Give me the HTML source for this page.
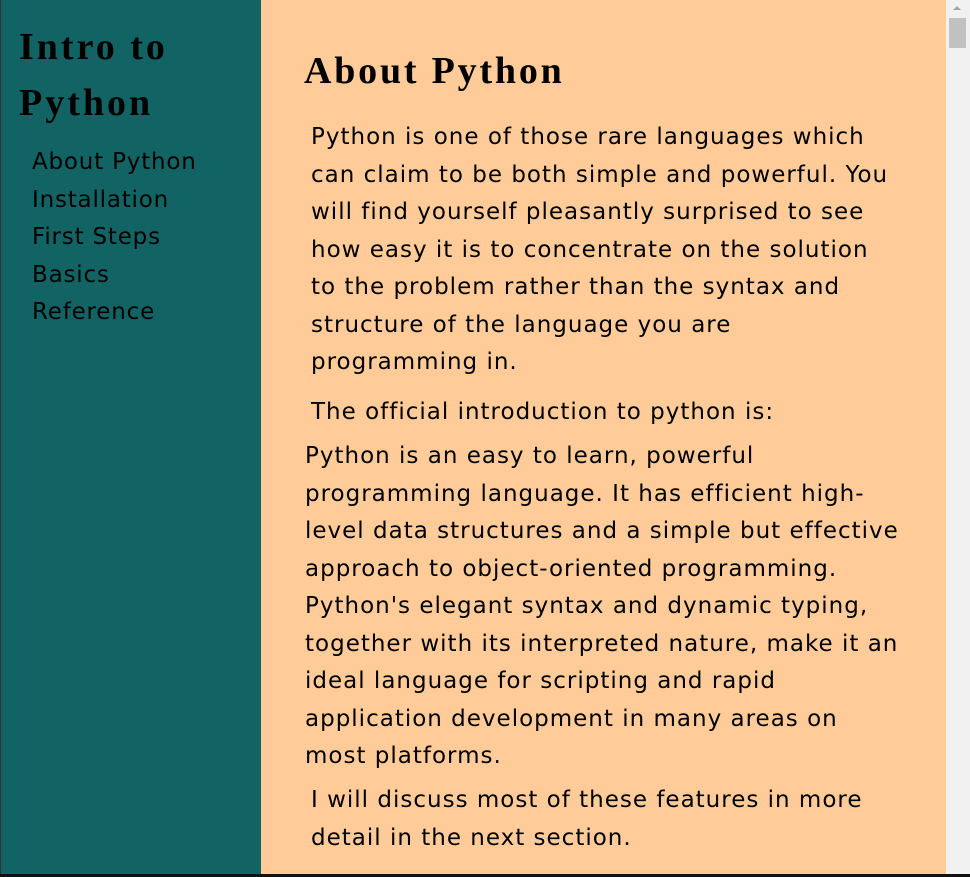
<!DOCTYPE html>
<html><head><meta charset="utf-8"><style>
html,body{margin:0;padding:0;}
body{width:970px;height:877px;overflow:hidden;position:relative;background:#ffcc99;font-family:"DejaVu Sans","Liberation Sans",sans-serif;color:#111;}
#side{position:absolute;left:0;top:0;width:260px;height:874px;background:#126464;border-left:1px solid #333;}
#side h1{font-family:"Liberation Serif",serif;font-weight:bold;font-size:38px;letter-spacing:3px;line-height:56px;margin:0;position:absolute;left:18px;top:19px;color:#000;}
#side ul{list-style:none;margin:0;padding:0;position:absolute;left:31px;top:144px;}
#side li{font-size:23px;letter-spacing:0.8px;line-height:37.5px;white-space:nowrap;color:#000;}
#main{position:absolute;left:261px;top:0;width:685px;height:874px;}
h2{font-family:"Liberation Serif",serif;font-weight:bold;font-size:38px;letter-spacing:2.8px;margin:0;position:absolute;left:43px;top:48px;line-height:46px;color:#000;}
.t{position:absolute;font-size:23px;letter-spacing:1px;line-height:37.5px;white-space:nowrap;color:#000;}
#sb{position:absolute;left:946px;top:0;width:24px;height:874px;background:#f1f1f1;}
#thumb{position:absolute;left:949px;top:18px;width:17px;height:30px;background:#c1c1c1;}
#bot{position:absolute;left:0;top:874px;width:970px;height:3px;background:#111;}
</style></head><body>
<div id="side"><h1>Intro to<br>Python</h1>
<ul><li>About Python</li><li>Installation</li><li>First Steps</li><li>Basics</li><li>Reference</li></ul></div>
<div id="main">
<h2>About Python</h2>
<div class="t" style="left:50px;top:119px">Python is one of those rare languages which<br>can claim to be both simple and powerful. You<br>will find yourself pleasantly surprised to see<br>how easy it is to concentrate on the solution<br>to the problem rather than the syntax and<br>structure of the language you are<br>programming in.</div>
<div class="t" style="left:50px;top:394px">The official introduction to python is:</div>
<div class="t" style="left:44px;top:438px">Python is an easy to learn, powerful<br>programming language. It has efficient high-<br>level data structures and a simple but effective<br>approach to object-oriented programming.<br>Python's elegant syntax and dynamic typing,<br>together with its interpreted nature, make it an<br>ideal language for scripting and rapid<br>application development in many areas on<br>most platforms.</div>
<div class="t" style="left:50px;top:782px">I will discuss most of these features in more<br>detail in the next section.</div>
</div>
<div id="sb"></div><div id="thumb"></div>
<svg style="position:absolute;left:952px;top:5px" width="10" height="6"><path d="M1 5 L5 1 L9 5Z" fill="#a3a3a3"/></svg>
<div id="bot"></div>
</body></html>
